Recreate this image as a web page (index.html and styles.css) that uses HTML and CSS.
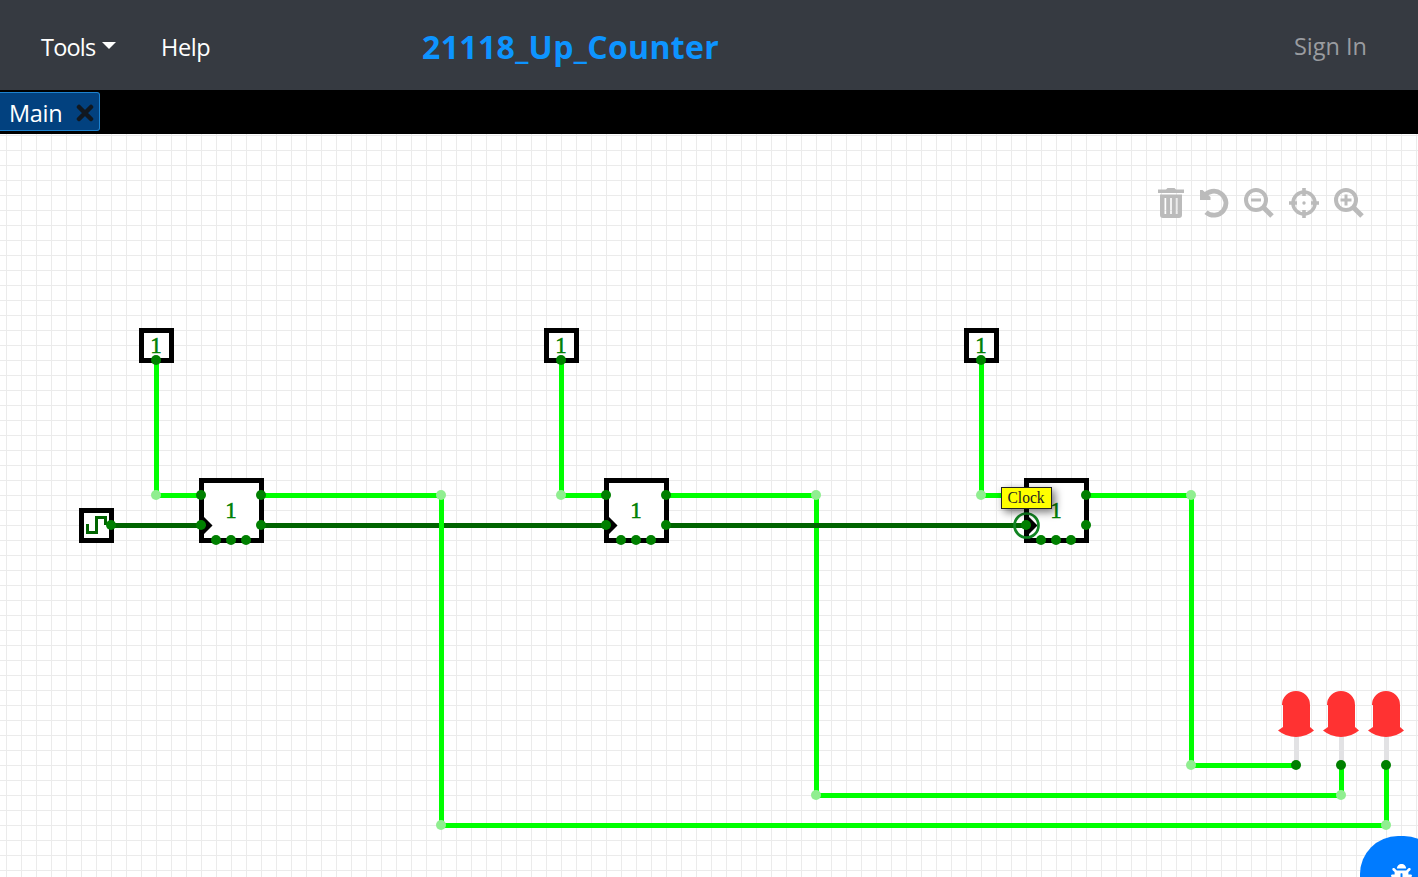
FILE: index.html
```html
<!DOCTYPE html>
<html lang="en">
<head>
<meta charset="utf-8">
<title>21118_Up_Counter</title>
<link rel="stylesheet" href="styles.css">
</head>
<body>
<header class="navbar">
  <nav class="menu">
    <a class="menu-item tools">Tools<span class="caret"></span></a>
    <a class="menu-item help">Help</a>
  </nav>
  <h1 class="project-name">21118_Up_Counter</h1>
  <a class="sign-in">Sign In</a>
</header>
<div class="tabs">
  <div class="tab"><span class="tab-name">Main</span>
    <svg class="tab-close" width="18" height="18" viewBox="0 0 18 18"><path d="M3 3L15 15M15 3L3 15"/></svg>
  </div>
</div>
<main class="workspace">
  <svg class="circuit" width="1418" height="743" viewBox="0 134 1418 743">
    <defs>
      <pattern id="grid" x="6" y="135" width="15" height="15" patternUnits="userSpaceOnUse"><path class="grid-line" d="M.5 0V15M0 .5H15"/></pattern>
      <g id="flipflop">
        <rect class="box" x="-30" y="-30" width="60" height="60"/>
        <path class="chevron" d="M-30 7.5L-22.5 15L-30 22.5"/>
        <text class="digit" x="-.5" y="7.5">1</text>
      </g>
      <g id="flipflop-pins" class="pin">
        <circle cx="-30.5" cy="-15.5" r="5"/><circle cx="-30.5" cy="14.5" r="5"/>
        <circle cx="29.5" cy="-15.5" r="5"/><circle cx="29.5" cy="14.5" r="5"/>
        <circle cx="-15.5" cy="29.5" r="5"/><circle cx="-.5" cy="29.5" r="5"/><circle cx="14.5" cy="29.5" r="5"/>
      </g>
      <g id="one">
        <rect class="box" x="-15" y="-15" width="30" height="30"/>
        <text class="digit" x="-.5" y="7.5">1</text>
      </g>
      <g id="led">
        <path class="stem" d="M.5 -29V0"/>
        <path class="lamp" d="M-14 -60A14 14 0 0 1 14 -60V-38L18 -34.5Q10 -28 0 -28Q-10 -28 -18 -34.5L-13 -38V-60Z"/>
      </g>
    </defs>
    <rect y="134" width="1418" height="743" fill="url(#grid)"/>
    <use href="#led" x="1296" y="765"/><use href="#led" x="1341" y="765"/><use href="#led" x="1386" y="765"/>
    <g class="boxes">
      <use href="#one" x="156.5" y="345.5"/><use href="#one" x="561.5" y="345.5"/><use href="#one" x="981.5" y="345.5"/>
      <use href="#flipflop" x="231.5" y="510.5"/><use href="#flipflop" x="636.5" y="510.5"/><use href="#flipflop" x="1056.5" y="510.5"/>
      <rect class="box" x="81.5" y="510.5" width="30" height="30"/>
      <path class="pulse" d="M87.5 524V532.5H96.5V517.5H105.5V525"/>
    </g>
    <path class="wire low" d="M111 525.5H201M261 525.5H606"/>
    <path class="wire high" d="M156.5 360V495.5H201M561.5 360V495.5H606M981.5 360V495.5H1026M261 495.5H441.5V825.5H1386.5V765M666 495.5H816.5V795.5H1341.5V765M1086 495.5H1191.5V765.5H1296"/>
    <path class="wire low" d="M666 525.5H1026"/>
    <g class="joint">
      <circle cx="156" cy="495" r="5"/><circle cx="561" cy="495" r="5"/><circle cx="981" cy="495" r="5"/>
      <circle cx="441" cy="495" r="5"/><circle cx="816" cy="495" r="5"/><circle cx="1191" cy="495" r="5"/>
      <circle cx="1191" cy="765" r="5"/><circle cx="816" cy="795" r="5"/><circle cx="1341" cy="795" r="5"/>
      <circle cx="441" cy="825" r="5"/><circle cx="1386" cy="825" r="5"/>
    </g>
    <g class="pin">
      <circle cx="156" cy="360" r="5"/><circle cx="561" cy="360" r="5"/><circle cx="981" cy="360" r="5"/>
      <circle cx="111" cy="525" r="5"/>
      <circle cx="1296" cy="765" r="5"/><circle cx="1341" cy="765" r="5"/><circle cx="1386" cy="765" r="5"/>
    </g>
    <use href="#flipflop-pins" x="231.5" y="510.5"/><use href="#flipflop-pins" x="636.5" y="510.5"/><use href="#flipflop-pins" x="1056.5" y="510.5"/>
    <circle class="hover-ring" cx="1026.5" cy="525.5" r="12"/>
    <g class="tooltip">
      <rect x="1001.5" y="487.5" width="50" height="21"/>
      <text x="1007.5" y="503" textLength="37" lengthAdjust="spacingAndGlyphs">Clock</text>
    </g>
  </svg>
  <div class="quick-actions">
    <svg width="26" height="30" viewBox="0 0 26 30"><path class="fill" fill-rule="evenodd" d="M0 1.5H8L9.5 0H16.5L18 1.5H26V5H0ZM2 6.5H24V27Q24 30 21 30H5Q2 30 2 27ZM6.5 10V26H8.2V10ZM12.2 10V26H13.8V10ZM17.8 10V26H19.5V10Z"/></svg>
    <svg width="30" height="30" viewBox="0 0 30 30"><path class="line arc" d="M5 8.5A12 12 0 1 1 7 24.2"/><path class="fill" d="M1 2H3.5L11.5 9V12H1Z"/></svg>
    <svg width="30" height="31" viewBox="0 0 30 31"><circle class="line" cx="12" cy="12" r="10"/><path class="handle" d="M19.5 19.5L28 28"/><path class="mark" d="M7 12H17"/></svg>
    <svg width="30" height="30" viewBox="0 0 30 30"><circle class="scope" cx="15" cy="15" r="11"/><path class="scope" d="M15 0V8M15 22V30M0 15H8M22 15H30"/><circle class="fill" cx="15" cy="15" r="1.7"/></svg>
    <svg width="31" height="31" viewBox="0 0 31 31"><circle class="line" cx="12" cy="12" r="10"/><path class="handle" d="M19.5 19.5L28 28"/><path class="mark" d="M6.5 12H17.5M12 6.5V17.5"/></svg>
  </div>
  <div class="report">
    <svg width="21" height="21" viewBox="0 0 512 512"><path d="M511.988 288.9c-.478 17.43-15.217 31.1-32.653 31.1H424v16c0 21.864-4.882 42.584-13.6 61.145l60.228 60.228c12.496 12.497 12.496 32.758 0 45.255-12.498 12.497-32.759 12.496-45.256 0l-54.736-54.736C345.886 467.965 314.351 480 280 480V236c0-6.627-5.373-12-12-12h-24c-6.627 0-12 5.373-12 12v244c-34.351 0-65.886-12.035-90.636-32.108l-54.736 54.736c-12.498 12.497-32.759 12.496-45.256 0-12.496-12.497-12.496-32.758 0-45.255l60.228-60.228C92.882 378.584 88 357.864 88 336v-16H32.666C15.23 320 .491 306.33.013 288.9-.484 270.816 14.028 256 32 256h56v-58.745l-46.628-46.628c-12.496-12.497-12.496-32.758 0-45.255 12.498-12.497 32.758-12.497 45.256 0L141.255 160h229.489l54.627-54.627c12.498-12.497 32.758-12.497 45.256 0 12.496 12.497 12.496 32.758 0 45.255L424 197.255V256h56c17.972 0 32.484 14.816 31.988 32.9zM257 0c-61.856 0-112 50.144-112 112h224C369 50.144 318.856 0 257 0z"/></svg>
  </div>
</main>
</body>
</html>
```
FILE: styles.css
```css
* { box-sizing: border-box; }
body {
  margin: 0;
  height: 877px;
  overflow: hidden;
  display: flex;
  flex-direction: column;
  font-family: "Open Sans", "Noto Sans", sans-serif;
  background: #fff;
}
.navbar {
  height: 90px;
  flex: none;
  display: flex;
  align-items: center;
  padding: 4px 51px 0 41px;
  background: #363a41;
  color: #fff;
}
.menu { display: flex; width: 381px; gap: 45px; }
.menu-item { font-size: 23.5px; line-height: 36px; white-space: nowrap; }
.tools { width: 75px; display: flex; letter-spacing: -.8px; }
.help { letter-spacing: -.4px; }
.caret {
  margin: 13px 0 0 auto;
  width: 14px;
  height: 7px;
  border: 7px solid transparent;
  border-top-color: #fff;
  border-bottom: 0;
}
.project-name { margin: 0; font-size: 32px; line-height: 40px; font-weight: 700; color: #0d94ff; letter-spacing: .33px; }
.sign-in { margin-left: auto; margin-top: -2px; font-size: 23.5px; color: #9a9ca0; }
.tabs { height: 44px; flex: none; padding-top: 2px; background: #000; }
.tab {
  width: 100px;
  height: 39px;
  display: flex;
  align-items: center;
  justify-content: space-between;
  padding: 3px 5px 0 9px;
  background: #02417f;
  border: 1px solid #1d82cf;
  border-left: 0;
  border-radius: 0 3px 3px 0;
  color: #fff;
}
.tab-name { font-size: 23.5px; line-height: 34px; letter-spacing: -.3px; }
.tab-close path { fill: none; stroke: #111820; stroke-width: 4.5; stroke-linecap: round; }
.workspace { position: relative; flex: 1; overflow: hidden; }
.circuit { display: block; }
.grid-line { fill: none; stroke: #ebebeb; }
.box { fill: #fff; stroke: #000; stroke-width: 5; }
.chevron { fill: none; stroke: #000; stroke-width: 5; }
.pulse { fill: none; stroke: #006400; stroke-width: 3; }
.digit { font: 23px "Liberation Serif", serif; fill: green; stroke: green; stroke-width: .5; text-anchor: middle; }
.wire { fill: none; stroke-width: 5; }
.high { stroke: #0f0; }
.low { stroke: #006400; }
.joint { fill: #90ee90; }
.pin { fill: #008000; }
.stem { stroke: #e2e2e4; stroke-width: 5; }
.lamp { fill: #ff3232; }
.hover-ring { fill: none; stroke: #118422; stroke-width: 2.7; }
.tooltip rect { fill: #ff0; stroke: #222; filter: drop-shadow(3px 3px 4px rgba(0, 0, 0, .55)); }
.tooltip text { font: 16px "Liberation Serif", serif; fill: #222; }
.quick-actions {
  position: absolute;
  top: 54px;
  left: 1158px;
  display: flex;
  align-items: flex-start;
  gap: 15px;
}
.quick-actions .fill { fill: #bbb; }
.quick-actions .line, .quick-actions .handle, .quick-actions .mark, .quick-actions .scope { fill: none; stroke: #bbb; stroke-width: 4; }
.quick-actions .handle { stroke-width: 5; }
.quick-actions .arc { stroke-width: 4.8; }
.quick-actions .mark { stroke-width: 3; }
.quick-actions .scope { stroke-width: 3.6; }
.report {
  position: absolute;
  left: 1360px;
  top: 702px;
  width: 82px;
  height: 78px;
  display: flex;
  justify-content: center;
  padding-top: 28px;
  border-radius: 38px;
  background: #007bff;
}
.report path { fill: #fff; }
```
